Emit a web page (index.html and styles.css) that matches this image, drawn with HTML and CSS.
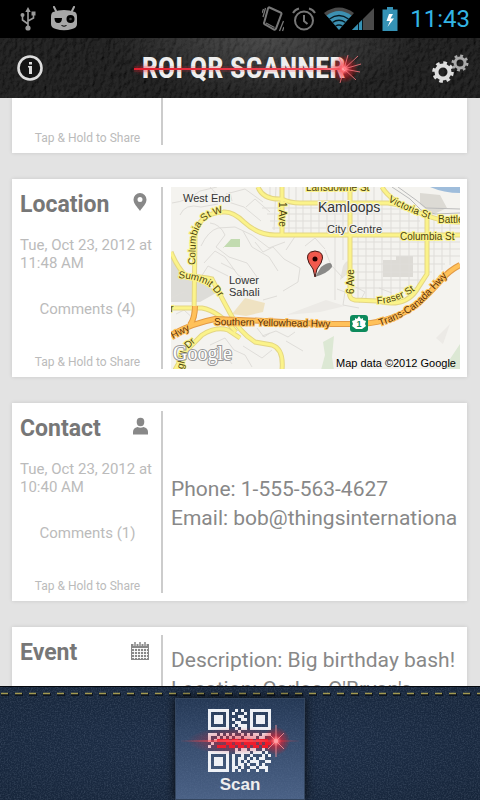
FILE: index.html
```html
<!DOCTYPE html>
<html lang="en">
  <head>
    <meta charset="UTF-8" />
    <meta name="viewport" content="width=device-width, initial-scale=1.0" />
    <title>ROI QR Scanner</title>
    <link rel="stylesheet" href="styles.css">
  </head>
  <body>
    <!-- Status bar -->
    <div class="status-bar">
      <div class="status-group">
        <svg width="16" height="24" viewBox="0 0 16 24" fill="none" stroke="#9a9a9a" stroke-width="1.6">
          <path d="M8 4V20M8 17L2.5 13V9M8 14L13.5 11V7" />
          <path d="M8 0L5.300 5H10.700Z" fill="#9a9a9a" stroke="none" />
          <circle cx="8" cy="21" r="2.600" fill="#9a9a9a" stroke="none" />
          <circle cx="2.500" cy="8" r="2" fill="#9a9a9a" stroke="none" />
          <path d="M11.500 4.500h4v4h-4z" fill="#9a9a9a" stroke="none" />
        </svg>
        <svg width="28" height="26" viewBox="0 0 28 26">
          <path d="M4 1L7 7M24 1L21 7" stroke="#a8a8a8" stroke-width="2" stroke-linecap="round" />
          <path d="M3 6Q14 2 25 6Q27 7 27 11V18Q27 22 22 23Q14 25.500 6 23Q1 22 1 18V11Q1 7 3 6Z" fill="#a8a8a8" />
          <path d="M4.500 12H12Q12 17 8.200 17T4.500 12Z" fill="#000" />
          <circle cx="20.500" cy="13" r="4" fill="#000" />
          <circle cx="20.500" cy="13" r="1.300" fill="#444" />
          <path d="M11.500 19.500Q14 21 16.500 19.500" stroke="#000" fill="none" />
        </svg>
      </div>
      <div class="status-group status-right">
        <svg width="22" height="26" viewBox="0 0 22 26" fill="none" stroke="#777">
          <path d="M7.500 1.500L18.500 6.500Q20 7 19.300 8.500L14 22.500Q13.300 24 12 23.500L3 18.500Q1.500 18 2.200 16.500L6 2.500Q6.500 1 7.500 1.500Z" stroke-width="2" />
          <path d="M1 11L3.500 2M17.500 25L21.500 15M0 7L1.500 3M20.500 25L22 21M4 17L12.500 21.500" stroke-width="1.300" />
        </svg>
        <svg width="24" height="24" viewBox="0 0 24 24" fill="none" stroke="#777" stroke-width="2">
          <circle cx="12" cy="13.500" r="9" />
          <path d="M12 8V14L15.500 17M1 6Q3 2.500 7 1.500M23 6Q21 2.500 17 1.500" />
        </svg>
        <svg width="50" height="24" viewBox="0 0 50 24">
          <path d="M0 6Q15 -5 30 6L26.500 10Q15 2 3.500 10Z" fill="#4a4a4a" />
          <path d="M2.500 8.500Q15 -0.500 27.500 8.500L15 23Z" fill="#3d91b2" />
          <path d="M5.500 12Q15 5 24.500 12M8.500 15.500Q15 11 21.500 15.500M11.500 19Q15 17 18.500 19" stroke="#061820" stroke-width="1.400" fill="none" />
          <path d="M28 23L50 1V23Z" fill="#4a4a4a" />
          <path d="M28 23L39 12V23Z" fill="#3592b5" />
          <path d="M34.500 16V23M38.500 12V23" stroke="#061820" />
        </svg>
        <svg width="16" height="24" viewBox="0 0 16 24">
          <path d="M5 0h6v2.500h4.500V24H.5V2.500H5Z" fill="#3592b5" />
          <path d="M7 7L4.500 14H8L5.500 20L12 11.500H8.500L11 7Z" fill="#fff" />
        </svg>
        <span class="clock">11:43</span>
      </div>
    </div>

    <!-- App header -->
    <header class="app-header">
      <svg class="texture" width="100%" height="100%" aria-hidden="true">
        <filter id="leather" x="0" y="0" width="100%" height="100%">
          <feTurbulence type="fractalNoise" baseFrequency="0.24 0.16" numOctaves="3" seed="4" />
          <feDiffuseLighting lighting-color="#2c2c2c" surfaceScale="1.600">
            <feDistantLight azimuth="225" elevation="42" />
          </feDiffuseLighting>
        </filter>
        <radialGradient id="sheen">
          <stop offset="0" stop-color="#fff" stop-opacity=".18" />
          <stop offset="1" stop-color="#fff" stop-opacity="0" />
        </radialGradient>
        <rect width="100%" height="100%" filter="url(#leather)" />
        <ellipse cx="55%" cy="0" rx="32%" ry="60" fill="url(#sheen)" />
      </svg>
      <button class="icon-button info-button" aria-label="Info">
        <svg width="26" height="26" viewBox="0 0 26 26">
          <circle cx="13" cy="13" r="11.500" fill="#151515" stroke="#ddd" stroke-width="2.600" />
          <path d="M12 7h3v2.500h-3zM11 11h4v8h-3v-6.500h-1z" fill="#ddd" />
        </svg>
      </button>
      <div class="logo">
        <h1>ROI QR SCANNER</h1>
        <svg class="laser" width="236" height="44" viewBox="0 0 236 44" aria-hidden="true">
          <defs>
            <radialGradient id="flare">
              <stop offset="0" stop-color="#fff" />
              <stop offset=".16" stop-color="#ff7078" />
              <stop offset=".4" stop-color="#f02030" stop-opacity=".55" />
              <stop offset="1" stop-color="#f00" stop-opacity="0" />
            </radialGradient>
            <radialGradient id="glow">
              <stop offset="0" stop-color="#f01828" stop-opacity=".8" />
              <stop offset="1" stop-color="#f01828" stop-opacity="0" />
            </radialGradient>
            <linearGradient id="beam">
              <stop offset="0" stop-color="#e02030" />
              <stop offset=".9" stop-color="#f04858" />
              <stop offset="1" stop-color="#ff98a0" />
            </linearGradient>
          </defs>
          <ellipse cx="14" cy="23" rx="13" ry="7" fill="url(#glow)" opacity=".4" />
          <rect x="4" y="20" width="208" height="6" fill="#f02030" opacity=".15" />
          <rect x="4" y="22" width="208" height="2" fill="url(#beam)" />
          <circle cx="214" cy="23" r="14" fill="url(#flare)" />
          <path d="M214 23L228 10M214 23L231 18M214 23L230 26M214 23L226 34M214 23L218 9M214 23L210 37M214 23L209 11" stroke="#ff7880" stroke-width=".8" />
        </svg>
      </div>
      <button class="icon-button settings-button" aria-label="Settings">
        <svg width="38" height="30" viewBox="0 0 38 30" fill="none">
          <g stroke="#aaa">
            <circle cx="28" cy="10" r="5" stroke-width="3" />
            <circle cx="28" cy="10" r="7.200" stroke-width="2.600" stroke-dasharray="2.800 2.850" />
          </g>
          <g stroke="#ddd">
            <circle cx="11" cy="19" r="6.500" stroke-width="4" />
            <circle cx="11" cy="19" r="9.300" stroke-width="3" stroke-dasharray="3.650 3.650" />
          </g>
        </svg>
      </button>
    </header>

    <!-- Scan history -->
    <main class="history">
      <article class="card card-end">
        <div class="card-side">
          <p class="share">Tap &amp; Hold to Share</p>
        </div>
      </article>

      <article class="card">
        <div class="card-side">
          <div class="card-title">
            <h2>Location</h2>
            <svg width="18" height="20" viewBox="0 0 18 20">
              <path d="M9 1A6.500 6.500 0 0 1 15.500 7.500C15.500 12 11.500 15 9 19C6.500 15 2.500 12 2.500 7.500A6.500 6.500 0 0 1 9 1ZM9 5A2.500 2.500 0 1 0 9 10A2.500 2.500 0 1 0 9 5Z" fill="#888" />
            </svg>
          </div>
          <p class="date">Tue, Oct 23, 2012 at 11:48 AM</p>
          <button class="comments">Comments (4)</button>
          <p class="share">Tap &amp; Hold to Share</p>
        </div>
        <svg class="map" viewBox="171 187 289 182" role="img" aria-label="Map of Kamloops">
          <rect x="171" y="187" width="289" height="183" fill="#f4f3ef" />
          <!-- areas -->
          <path d="M171 252L184 275L209 285L216 293L200 302H171Z" fill="#dddcd8" />
          <path d="M430 187Q444 193 460 193V187Z" fill="#9fbddb" />
          <path d="M420 193L440 195L447 208L432 215L420 204Z" fill="#dcdad4" />
          <path d="M383 260H396V256H413V277H383Z" fill="#dddbd6" />
          <path d="M343 266Q350 254 350 272L340 280Z" fill="#e6e3dc" />
          <path d="M223 248L231 239H240V247H223Z" fill="#c2dbb0" />
          <path d="M232 314L245 298L265 303L263 312L246 316Z" fill="#efe2c2" />
          <path d="M323 342L334 336L332 357L334 370H321L325 355ZM448 362L460 344V370H446Z" fill="#dce8d4" />
          <path d="M286 315L326 300L345 306L320 312ZM436 338L450 324L443 344Z" fill="#eceae6" />
          <!-- small streets -->
          <g fill="none" stroke="#dfddd9">
            <path d="M270 187V197M276 187L274 230M289 187V234M296 187V234M303 187V234M311 187V234M319 187V234M327 187V234M335 187V300M343 187V260M358 187V300M366 187V300M374 187V300M382 187V300M391 200V300M400 205V300M409 210V300M418 214V285M434 218V280M442 220V270M450 222V265" />
            <path d="M262 208H380M267 214H410M270 221H420M272 228H460M352 242H460M352 249H460M352 256H460M352 264H445M352 272H432M352 280H424M352 288H416M352 209H404" />
            <path d="M172 203Q188 201 200 191L217 187M210 187L222 200L244 207L261 221M180 215Q185 203 201 207L218 204M226 194L245 189L263 202M232 201L230 192M246 207L255 199L270 212" />
            <path d="M201 246Q208 231 218 228L235 227L252 235L269 248L285 242M210 223Q220 224 225 235L216 247L229 257L247 263L257 277M204 263L215 251L225 257L238 275L250 282M243 231L252 247L269 257L278 271M286 250L296 235M255 242L263 252L273 247L284 259L300 268L298 282L283 291M201 277L208 266L228 276M221 263L235 270" />
            <path d="M171 298L184 292L196 300M176 314L184 310L196 321M210 345L225 338L234 350L245 355L252 367M243 346L262 358L272 350M262 336L276 331L288 337L295 332M257 328L264 337L270 333M203 351L214 356L222 350L232 364M286 341L303 351M263 300L277 296M305 246L315 238L325 249M325 250L331 265L343 278M337 289L345 292L343 305L359 308M379 288L392 293M352 285L365 292L359 303" />
          </g>
          <path d="M392 187L410 199L421 210L435 214L460 213M398 187L416 200L426 208L460 209" fill="none" stroke="#bbb" />
          <!-- yellow roads -->
          <g fill="none" stroke="#e4d683" stroke-width="5">
            <path d="M171 252Q177 267 186 276Q204 277 212 279Q218 291 230 313Q239 332 255 342L272 345Q284 349 282 370" />
            <path d="M175 370L185 352L202 335Q216 326 228 330L240 338M172 308H202Q219 311 236 332" />
            <path d="M194 318L195 235Q199 213 223 212Q233 211 244 222Q258 235 275 235H460" />
            <path d="M258 187Q263 200 282 199Q290 203 300 203H388L401 205M282 187V235M350 187V290Q348 299 355 300L377 301Q404 308 416 291L427 274V213M382 187Q390 201 417 212T460 222" />
          </g>
          <g fill="none" stroke="#fbf38a" stroke-width="3">
            <path d="M171 252Q177 267 186 276Q204 277 212 279Q218 291 230 313Q239 332 255 342L272 345Q284 349 282 370" />
            <path d="M175 370L185 352L202 335Q216 326 228 330L240 338M172 308H202Q219 311 236 332" />
            <path d="M194 318L195 235Q199 213 223 212Q233 211 244 222Q258 235 275 235H460" />
            <path d="M258 187Q263 200 282 199Q290 203 300 203H388L401 205M282 187V235M350 187V290Q348 299 355 300L377 301Q404 308 416 291L427 274V213M382 187Q390 201 417 212T460 222" />
          </g>
          <!-- highways -->
          <path d="M171 335Q193 323 215 319L265 321L320 324H350Q385 325 410 309Q423 301 442 279Q450 270 460 265M190 325Q195 318 195 306" fill="none" stroke="#e29a45" stroke-width="6" />
          <path d="M171 335Q193 323 215 319L265 321L320 324H350Q385 325 410 309Q423 301 442 279Q450 270 460 265M190 325Q195 318 195 306" fill="none" stroke="#ffc15a" stroke-width="4" />
          <!-- labels -->
          <defs>
            <path id="columbia-line" d="M195 265L196 241Q198 219 218 214L240 207" />
            <path id="summit-line" d="M178 278Q193 279 203 283T222 302" />
            <path id="canada-line" d="M380 326Q409 316 423 302T456 266" />
            <path id="victoria-line" d="M388 201Q404 211 436 221" />
            <path id="fraser-line" d="M377 304Q400 303 418 288" />
          </defs>
          <g class="road-label">
            <text><textPath href="#columbia-line">Columbia St W</textPath></text>
            <text><textPath href="#summit-line">Summit Dr</textPath></text>
            <text class="highway"><textPath href="#canada-line">Trans-Canada Hwy</textPath></text>
            <text><textPath href="#victoria-line">Victoria St</textPath></text>
            <text><textPath href="#fraser-line">Fraser St</textPath></text>
            <text x="306" y="191">Lansdowne St</text>
            <text x="438" y="223">Battle St</text>
            <text x="400" y="240">Columbia St</text>
            <text class="highway" x="214" y="325" transform="rotate(1 214 325)">Southern Yellowhead Hwy</text>
            <text class="highway" transform="translate(173 339) rotate(-28)">Hwy</text>
            <text x="163" y="312">Dr</text>
            <text transform="translate(279 202) rotate(90)">1 Ave</text>
            <text transform="translate(354 294) rotate(-90)">6 Ave</text>
            <text transform="translate(181 377) rotate(-76)">inghill</text>
            <text transform="translate(188 349) rotate(-42)">Dr</text>
          </g>
          <g class="place-label">
            <text x="183" y="202">West End</text>
            <text x="327" y="233">City Centre</text>
            <text x="229" y="284">Lower</text>
            <text x="229" y="296">Sahali</text>
            <text class="city" x="318" y="212">Kamloops</text>
          </g>
          <text class="google" x="173" y="360">Google</text>
          <text class="map-data" x="456" y="367" text-anchor="end">Map data ©2012 Google</text>
          <!-- route shield -->
          <rect x="350" y="315" width="18" height="17" rx="3" fill="#0d8a5c" />
          <path d="M359 316L361 319L363 318V320L366 321L365 324L366 326L362 329H356L352 326L353 324L352 321L355 320V318L357 319Z" fill="#fff" />
          <text class="shield" x="359" y="327" text-anchor="middle">1</text>
          <!-- pin -->
          <path d="M315 277L321 267Q332 259 332 267Q328 273 315 277Z" fill="#333" opacity=".55" />
          <path d="M315 277Q314 268 309 263Q304 252 315 251Q326 252 321 263Q316 268 315 277Z" fill="#f1594d" stroke="#401512" />
          <circle cx="315" cy="259" r="2.500" fill="#200" />
        </svg>
      </article>

      <article class="card">
        <div class="card-side">
          <div class="card-title">
            <h2>Contact</h2>
            <svg width="18" height="20" viewBox="0 0 18 20" fill="#888">
              <ellipse cx="9.500" cy="6" rx="3.800" ry="4.200" />
              <path d="M2 18.500V16Q2 12 6.500 11Q9.500 12.500 12.500 11Q17 12 17 16V18.500Z" />
            </svg>
          </div>
          <p class="date">Tue, Oct 23, 2012 at 10:40 AM</p>
          <button class="comments">Comments (1)</button>
          <p class="share">Tap &amp; Hold to Share</p>
        </div>
        <div class="details">
          <p>Phone: 1-555-563-4627</p>
          <p>Email: bob@thingsinternationa</p>
        </div>
      </article>

      <article class="card">
        <div class="card-side">
          <div class="card-title">
            <h2>Event</h2>
            <svg width="18" height="20" viewBox="0 0 18 20">
              <path d="M0 4H18V20H0Z" fill="#888" />
              <path d="M1 8.500H17M1 11.500H17M1 14.500H17M1 17.500H17M3.500 8V19M6.500 8V19M9.500 8V19M12.500 8V19M15.500 8V19" stroke="#fff" stroke-width=".9" />
              <path d="M4 2V6M9 2V6M14 2V6" stroke="#fff" stroke-width="3" />
              <path d="M4 2V6M9 2V6M14 2V6" stroke="#888" stroke-width="1.500" />
            </svg>
          </div>
        </div>
        <div class="details details-top">
          <p>Description: Big birthday bash!</p>
          <p>Location: Carlos O'Bryan's</p>
        </div>
      </article>
    </main>

    <!-- Scan bar -->
    <footer class="scan-bar">
      <svg class="texture" width="100%" height="100%" aria-hidden="true">
        <filter id="denim" x="0" y="0" width="100%" height="100%">
          <feTurbulence type="fractalNoise" baseFrequency="0.7" numOctaves="2" seed="8" />
          <feColorMatrix values="0 0 0 0 .55  0 0 0 0 .65  0 0 0 0 .8  .9 0 0 0 -.35" />
        </filter>
        <rect width="100%" height="100%" filter="url(#denim)" opacity=".35" />
        <line x1="1" y1="7.500" x2="100%" y2="7.500" stroke="#0c1420" stroke-width="3" stroke-dasharray="8 6" />
        <line x1="1" y1="6.500" x2="100%" y2="6.500" stroke="#a39a52" stroke-width="1.500" stroke-dasharray="7 7" />
      </svg>
      <button class="scan-button">
        <svg width="130" height="72" viewBox="0 0 130 72" aria-hidden="true">
          <g id="qr" fill="#eef1f6"></g>
          <ellipse cx="62" cy="38" rx="50" ry="14" fill="url(#glow)" opacity=".75" />
          <g id="qr-lit" fill="#ee1c2c"></g>
          <path d="M4 38L65 37L126 38L65 39Z" fill="#ff4a50" />
          <circle cx="101" cy="38" r="14" fill="url(#flare)" />
          <path d="M101 22V54M93 30L109 46M109 30L93 46" stroke="#ff9aa0" stroke-width=".8" />
        </svg>
        <span>Scan</span>
      </button>
    </footer>

    <script>
      const rows = [
        "111111100101001111111",
        "100000101000101000001",
        "101110100011001011101",
        "101110101001101011101",
        "101110100110001011101",
        "100000101011101000001",
        "111111100101101111111",
        "000000000010000000000",
        "111010101001010110111",
        "100101010110111101100",
        "101111101101101011110",
        "010000110110111101011",
        "100111011011010110110",
        "000000000101101100100",
        "111111100111110111010",
        "100000101001001000101",
        "101110101011010101100",
        "101110101010101110011",
        "101110101011010010100",
        "100000101101001101110",
        "111111101010010010010",
      ];

      // One square per module, 3px each
      function drawModules(id, from, to, startColumn) {
        let squares = "";
        for (let y = from; y < to; y++) {
          for (let x = startColumn; x < 21; x++) {
            if (rows[y][x] === "1") {
              squares += `<rect x="${33 + x * 3}" y="${6 + y * 3}" width="3" height="3" />`;
            }
          }
        }
        document.getElementById(id).innerHTML = squares;
      }

      drawModules("qr", 0, 21, 0);
      drawModules("qr-lit", 10, 13, 3);
    </script>
  </body>
</html>
```

FILE: styles.css
```css
* {
  box-sizing: border-box;
}

body {
  display: flex;
  flex-direction: column;
  height: 100vh;
  margin: 0;
  font-family: Roboto, "Liberation Sans", sans-serif;
  background-color: #e3e3e3;
  overflow: hidden;
}

h1,
h2,
p {
  margin: 0;
}

button {
  padding: 0;
  border: 0;
  background: none;
  font-family: inherit;
  cursor: pointer;
}

.status-bar {
  display: flex;
  flex-shrink: 0;
  justify-content: space-between;
  align-items: center;
  height: 38px;
  padding: 0 10px 0 20px;
  background-color: #000;
}

.status-group {
  display: flex;
  align-items: center;
  gap: 14px;
}

.status-right {
  gap: 8px;
}

.clock {
  padding-left: 4px;
  color: #33b5e5;
  font-size: 24px;
  line-height: 28px;
}

.app-header {
  position: relative;
  display: grid;
  flex-shrink: 0;
  grid-template-columns: 1fr auto 1fr;
  align-items: center;
  height: 60px;
  padding: 0 10px 0 17px;
  background-color: #1b1b1b;
}

.texture {
  position: absolute;
  top: 0;
  left: 0;
}

.icon-button {
  position: relative;
  display: flex;
}

.settings-button {
  justify-self: end;
}

.logo {
  position: relative;
}

.logo h1 {
  color: #eee;
  font-family: "Roboto Condensed", "Liberation Sans Narrow", "Liberation Sans", sans-serif;
  font-size: 29px;
  line-height: 44px;
  white-space: nowrap;
}

.laser {
  position: absolute;
  top: 0;
  left: -12px;
}

.history {
  display: flex;
  flex: 1;
  flex-direction: column;
  gap: 26px;
  min-height: 0;
  padding: 0 13px 0 12px;
  overflow: hidden;
}

.card {
  display: grid;
  flex-shrink: 0;
  grid-template-columns: 143px 1fr;
  gap: 8px;
  min-height: 198px;
  padding: 8px 7px 8px 8px;
  background-color: #fff;
  box-shadow: 0 0 4px rgba(0, 0, 0, 0.12);
}

.card-end {
  min-height: 55px;
  padding-top: 0;
}

.card-side {
  display: flex;
  flex-direction: column;
  padding-right: 6px;
  border-right: 2px solid #ccc;
}

.card-title {
  display: flex;
  justify-content: space-between;
  align-items: center;
  height: 36px;
  padding-right: 6px;
}

.card-title h2 {
  color: #777;
  font-size: 23px;
  line-height: 36px;
}

.card-title svg {
  margin-bottom: 6px;
}

.date {
  margin-top: 13px;
  color: #bbb;
  font-size: 15px;
  line-height: 18px;
}

.comments {
  margin-top: 28px;
  color: #bbb;
  font-size: 15px;
  line-height: 18px;
}

.share {
  margin-top: auto;
  color: #bbb;
  font-size: 12px;
  line-height: 14px;
  text-align: center;
}

.map {
  display: block;
  width: 100%;
  font-family: "Liberation Sans", Arial, sans-serif;
}

.road-label {
  fill: #4d4410;
  stroke: #fbf38a;
  stroke-width: 2px;
  paint-order: stroke;
  font-size: 10px;
}

.road-label .highway {
  fill: #5a2f08;
  stroke: #ffc15a;
}

.place-label {
  fill: #333;
  stroke: #f4f3ef;
  stroke-width: 2px;
  paint-order: stroke;
  font-size: 11px;
}

.place-label .city {
  font-size: 14px;
}

.google {
  fill: #fff;
  stroke: #999;
  stroke-width: 2px;
  paint-order: stroke;
  font-family: "Liberation Serif", serif;
  font-size: 20px;
}

.map-data {
  fill: #000;
  font-size: 11px;
}

.shield {
  fill: #0d8a5c;
  font-size: 9px;
  font-weight: bold;
}

.details {
  align-self: center;
  min-width: 0;
  padding-top: 4px;
  color: #888;
  font-size: 21px;
  line-height: 29px;
}

.details-top {
  align-self: start;
  padding-top: 11px;
}

.details p {
  overflow: hidden;
  white-space: nowrap;
}

.scan-bar {
  position: relative;
  display: flex;
  flex-shrink: 0;
  justify-content: center;
  align-items: flex-end;
  height: 114px;
  border-top: 1px solid #05080d;
  background: radial-gradient(ellipse at center, #1e2f49, #17263b);
}

.scan-button {
  position: relative;
  display: flex;
  flex-direction: column;
  align-items: center;
  width: 130px;
  height: 102px;
  border: 1px solid #34465f;
  background: linear-gradient(rgba(50, 75, 112, 0.4), rgba(94, 120, 162, 0.7));
  box-shadow: 0 0 10px rgba(0, 0, 0, 0.8);
}

.scan-button svg {
  margin-top: 4px;
}

.scan-button span {
  color: #eee;
  font-family: "Liberation Sans", Arial, sans-serif;
  font-size: 17px;
  font-weight: bold;
  line-height: 20px;
}
```
